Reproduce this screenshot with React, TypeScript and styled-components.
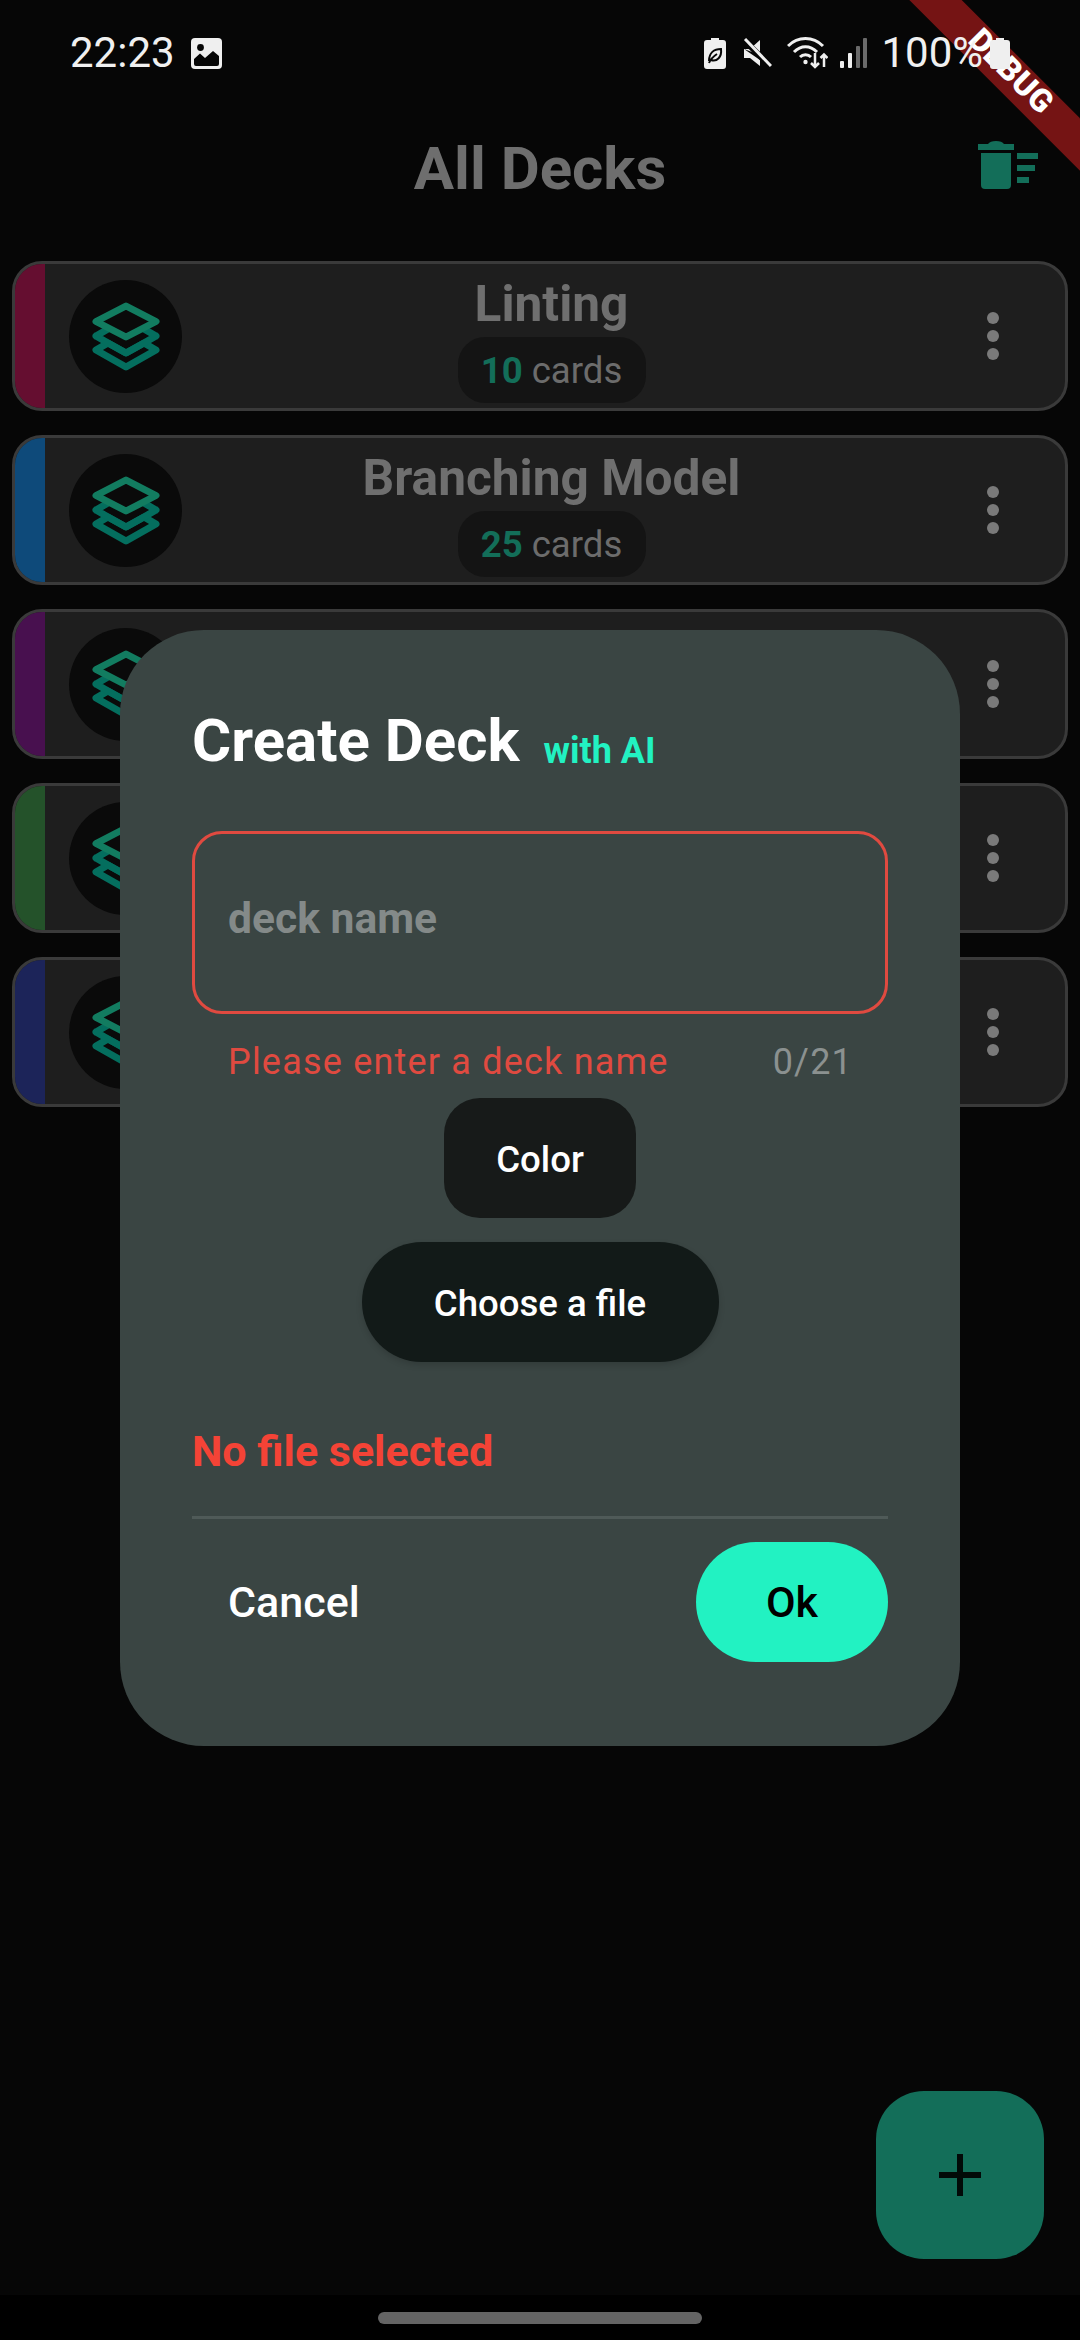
import React from "react";
import styled, { createGlobalStyle } from "styled-components";

const Global = createGlobalStyle`
  html, body { margin: 0; padding: 0; background: #060606; }
  body { font-family: Roboto, "Liberation Sans", sans-serif; overflow: hidden; }
  * { box-sizing: border-box; }
`;

const Page = styled.div`
  position: relative;
  width: 1080px;
  height: 2340px;
  display: flex;
  flex-direction: column;
  background: #060606;
  overflow: hidden;
`;

const Content = styled.main`
  flex: 1;
  display: flex;
  flex-direction: column;
`;

const StatusBar = styled.div`
  position: relative;
  z-index: 3;
  height: 72px;
  padding: 37px 70px 0 70px;
  display: flex;
  align-items: flex-start;
  justify-content: space-between;
  color: #eeeeee;
`;

const StatusLeft = styled.div`
  display: flex;
  align-items: center;
  gap: 16px;
  height: 32px;
`;

const StatusRight = styled.div`
  display: flex;
  align-items: center;
  height: 32px;
`;

const StatusText = styled.span`
  font-family: Roboto, sans-serif;
  font-size: 42px;
  line-height: 32px;
  font-weight: 400;
  color: #f0f0f0;
`;

const Percent = styled(StatusText)`
  margin-left: 14px;
  margin-right: 7px;
`;

const StatusIcon = styled.svg<{ $gap?: number }>`
  display: block;
  flex: none;
  margin-right: ${(p) => p.$gap ?? 0}px;
`;

const Header = styled.header`
  height: 189px;
  display: grid;
  grid-template-columns: 1fr auto 1fr;
  align-items: center;
  padding: 0 42px;
`;

const Title = styled.h1`
  grid-column: 2;
  margin: 0;
  padding-top: 3px;
  font-size: 60px;
  font-weight: 700;
  color: #6e6e6e;
`;

const TrashIcon = styled.svg`
  grid-column: 3;
  justify-self: end;
  display: block;
  margin-bottom: 3px;
`;

const DeckList = styled.div`
  display: flex;
  flex-direction: column;
  gap: 24px;
  padding: 0 12px;
`;

const Card = styled.div`
  height: 150px;
  display: flex;
  align-items: center;
  background: #1e1e1e;
  border: 3px solid #3a3a3a;
  border-radius: 30px;
  overflow: hidden;
`;

const Stripe = styled.div<{ $color: string }>`
  width: 30px;
  align-self: stretch;
  flex: none;
  background: ${(p) => p.$color};
`;

const Avatar = styled.div`
  width: 113px;
  height: 113px;
  margin-left: 24px;
  flex: none;
  border-radius: 50%;
  background: #0a0a0a;
  display: flex;
  align-items: center;
  justify-content: center;
`;

const CardBody = styled.div`
  flex: 1;
  min-width: 0;
  padding-top: 2px;
  display: flex;
  flex-direction: column;
  align-items: center;
`;

const DeckName = styled.div`
  font-size: 49.6px;
  line-height: 66px;
  font-weight: 700;
  color: #6f6f6f;
`;

const CountPill = styled.div`
  width: 188px;
  height: 66px;
  border-radius: 27px;
  background: #141414;
  display: flex;
  align-items: center;
  justify-content: center;
  gap: 9px;
  font-size: 36.6px;
  color: #6c6c6c;
`;

const CountValue = styled.span`
  font-weight: 700;
  color: #136e59;
`;

const MenuButton = styled.div`
  width: 144px;
  flex: none;
  display: flex;
  justify-content: center;
`;

const Dialog = styled.section`
  position: absolute;
  z-index: 2;
  left: 120px;
  top: 630px;
  width: 840px;
  height: 1116px;
  padding: 72px 72px 84px;
  background: #3a4543;
  border-radius: 84px;
  display: flex;
  flex-direction: column;
`;

const DialogTitleRow = styled.div`
  display: flex;
  align-items: flex-end;
  gap: 24px;
  height: 78px;
  margin-bottom: 51px;
`;

const DialogTitle = styled.h2`
  margin: 0;
  font-size: 60px;
  line-height: 78px;
  font-weight: 700;
  color: #ffffff;
`;

const AiTag = styled.span`
  font-size: 36px;
  line-height: 57px;
  font-weight: 700;
  color: #22f2c2;
`;

const NameField = styled.div`
  height: 183px;
  padding: 0 33px 9px;
  display: flex;
  align-items: center;
  border: 3px solid #e04a40;
  border-radius: 30px;
  font-size: 42.6px;
  font-weight: 700;
  color: #848a89;
`;

const HelperRow = styled.div`
  height: 84px;
  padding: 27px 35px 0 36px;
  display: flex;
  justify-content: space-between;
  font-size: 36px;
  line-height: 42px;
  letter-spacing: 1.2px;
`;

const HelperError = styled.span`
  color: #e04a40;
`;

const HelperCount = styled.span`
  color: #8b9190;
`;

const ButtonStack = styled.div`
  display: flex;
  flex-direction: column;
  align-items: center;
  gap: 24px;
`;

const ColorButton = styled.button`
  width: 192px;
  height: 120px;
  border: 0;
  border-radius: 36px;
  padding: 3px 0 0;
  background: #171a19;
  color: #ffffff;
  font: 500 36.6px Roboto, sans-serif;
`;

const FileButton = styled.button`
  width: 357px;
  height: 120px;
  border: 0;
  border-radius: 60px;
  padding: 3px 0 0;
  background: #121a18;
  color: #ffffff;
  font: 500 36.6px Roboto, sans-serif;
  box-shadow: 0 3px 6px rgba(0, 0, 0, 0.15);
`;

const FileError = styled.div`
  margin-top: 62px;
  font-size: 43px;
  line-height: 54px;
  font-weight: 700;
  color: #f44336;
`;

const Divider = styled.hr`
  margin: 38px 0 23px;
  height: 3px;
  border: 0;
  background: #4f5a58;
`;

const DialogActions = styled.div`
  display: flex;
  align-items: center;
  justify-content: space-between;
`;

const CancelButton = styled.button`
  padding: 0 0 0 36px;
  border: 0;
  background: transparent;
  color: #ffffff;
  font: 500 43px Roboto, sans-serif;
`;

const OkButton = styled.button`
  width: 192px;
  height: 120px;
  border: 0;
  border-radius: 60px;
  padding: 0;
  background: #22f2c2;
  color: #000000;
  font: 500 43px Roboto, sans-serif;
`;

const Fab = styled.button`
  position: absolute;
  z-index: 2;
  left: 876px;
  top: 2091px;
  width: 168px;
  height: 168px;
  border: 0;
  border-radius: 48px;
  padding: 0;
  background: #136e59;
  display: flex;
  align-items: center;
  justify-content: center;
`;

const NavBar = styled.div`
  height: 45px;
  padding-top: 1px;
  background: #000000;
  display: flex;
  align-items: center;
  justify-content: center;
`;

const HomePill = styled.div`
  width: 324px;
  height: 12px;
  border-radius: 6px;
  background: #646464;
`;

const Ribbon = styled.div`
  position: absolute;
  z-index: 1;
  left: 856px;
  top: 55px;
  width: 306px;
  height: 37px;
  padding-bottom: 6px;
  transform: rotate(45deg);
  background: #751414;
  color: #ffffff;
  display: flex;
  align-items: center;
  justify-content: center;
  font-size: 32px;
  line-height: 37px;
  font-weight: 900;
  letter-spacing: 0.5px;
`;

const LayersIcon = () => (
  <svg width="68" height="69" viewBox="0 0 68 69" fill="none" strokeLinejoin="round" strokeLinecap="round">
    <path d="M4 48 34 65 64 48 52 41 34 51 16 41Z" stroke="#046e5e" strokeWidth="7" />
    <path d="M4 34 16 27M64 34 52 27M4 34 16 41M64 34 52 41M16 41 34 51 52 41" stroke="#046e5e" strokeWidth="7" />
    <path d="M34 4 64 19.500 34 35 4 19.500Z" stroke="#127c60" strokeWidth="7" />
  </svg>
);

const Kebab = () => (
  <svg width="12" height="48" viewBox="0 0 12 48" fill="#7a7a7a">
    <circle cx="6" cy="6" r="6" />
    <circle cx="6" cy="24" r="6" />
    <circle cx="6" cy="42" r="6" />
  </svg>
);

const decks = [
  { name: "Linting", count: 10, color: "#650e30" },
  { name: "Branching Model", count: 25, color: "#0e4a7a" },
  { name: "", count: 0, color: "#48104f" },
  { name: "", count: 0, color: "#24522a" },
  { name: "", count: 0, color: "#1c2459" },
];

export default function App() {
  return (
    <Page>
      <Global />
      <Content>
        <StatusBar>
          <StatusLeft>
            <StatusText>22:23</StatusText>
            <StatusIcon width="31" height="31" viewBox="0 0 31 31">
              <rect width="31" height="31" rx="4" fill="#efefef" />
              <circle cx="9.500" cy="9.500" r="3.400" fill="#060606" />
              <path d="M3 26V21L9 15.500 14 20 22 13 28 18V26Q28 28 26 28H5Q3 28 3 26Z" fill="#060606" />
            </StatusIcon>
          </StatusLeft>
          <StatusRight>
            <StatusIcon $gap={17} width="22" height="31" viewBox="0 0 22 31">
              <path d="M7 0H15V2H19Q22 2 22 5V28Q22 31 19 31H3Q0 31 0 28V5Q0 2 3 2H7Z" fill="#efefef" />
              <path d="M5 23C5 15 10 11 17 11 18 19 13 24 7 22M5 25C7 20 10 18 13 16" fill="none" stroke="#060606" strokeWidth="2" />
            </StatusIcon>
            <StatusIcon $gap={15} width="29" height="30" viewBox="0 0 29 30">
              <path d="M1 11H7L17 2V17ZM1 11V20H7L17 28V22Z" fill="#efefef" />
              <path d="M1 2 28 29" stroke="#060606" strokeWidth="6" />
              <path d="M2 1 28 28" stroke="#efefef" strokeWidth="3" />
            </StatusIcon>
            <StatusIcon $gap={12} width="41" height="32" viewBox="0 0 41 32" fill="none" stroke="#efefef">
              <path d="M1 9C11 -1 26 -1 36 9" strokeWidth="3" />
              <path d="M7 15C14 8 23 8 30 15" strokeWidth="3" />
              <path d="M13 20C16 17 21 17 24 20" strokeWidth="3" />
              <circle cx="18.500" cy="25" r="2.200" fill="#efefef" stroke="none" />
              <path d="M28 16V30M24 26 28 30 32 26" strokeWidth="2.500" />
              <path d="M37 30V18M33.500 21 37 17.500 40.500 21" strokeWidth="2.500" />
            </StatusIcon>
            <StatusIcon width="27" height="30" viewBox="0 0 27 30">
              <rect x="0" y="23" width="4" height="7" rx="1" fill="#efefef" />
              <rect x="8" y="15" width="4" height="15" rx="1" fill="#efefef" />
              <rect x="16" y="8" width="4" height="22" rx="1" fill="#6a6a6a" />
              <rect x="23" y="0" width="4" height="30" rx="1" fill="#6a6a6a" />
            </StatusIcon>
            <Percent>100%</Percent>
            <StatusIcon width="20" height="31" viewBox="0 0 20 31">
              <path d="M6 0H14V2H17Q20 2 20 5V28Q20 31 17 31H3Q0 31 0 28V5Q0 2 3 2H6Z" fill="#efefef" />
            </StatusIcon>
          </StatusRight>
        </StatusBar>
        <Ribbon>DEBUG</Ribbon>
        <Header>
          <Title>All Decks</Title>
          <TrashIcon width="60" height="48" viewBox="0 0 60 48" fill="#136e59">
            <path d="M0 3H10Q12 0 18 0T26 3H36V9H0Z" />
            <path d="M3 12H33V44Q33 48 29 48H7Q3 48 3 44Z" />
            <rect x="39" y="12" width="21" height="6" />
            <rect x="39" y="24" width="18" height="6" />
            <rect x="39" y="36" width="12" height="6" />
          </TrashIcon>
        </Header>
        <DeckList>
          {decks.map((deck, i) => (
            <Card key={i}>
              <Stripe $color={deck.color} />
              <Avatar>
                <LayersIcon />
              </Avatar>
              <CardBody>
                {deck.name && (
                  <>
                    <DeckName>{deck.name}</DeckName>
                    <CountPill>
                      <CountValue>{deck.count}</CountValue>
                      <span>cards</span>
                    </CountPill>
                  </>
                )}
              </CardBody>
              <MenuButton>
                <Kebab />
              </MenuButton>
            </Card>
          ))}
        </DeckList>
      </Content>
      <Dialog>
        <DialogTitleRow>
          <DialogTitle>Create Deck</DialogTitle>
          <AiTag>with AI</AiTag>
        </DialogTitleRow>
        <NameField>deck name</NameField>
        <HelperRow>
          <HelperError>Please enter a deck name</HelperError>
          <HelperCount>0/21</HelperCount>
        </HelperRow>
        <ButtonStack>
          <ColorButton>Color</ColorButton>
          <FileButton>Choose a file</FileButton>
        </ButtonStack>
        <FileError>No file selected</FileError>
        <Divider />
        <DialogActions>
          <CancelButton>Cancel</CancelButton>
          <OkButton>Ok</OkButton>
        </DialogActions>
      </Dialog>
      <Fab aria-label="Add deck">
        <svg width="42" height="42" viewBox="0 0 42 42">
          <path d="M21 0V42M0 21H42" stroke="#020a08" strokeWidth="6" />
        </svg>
      </Fab>
      <NavBar>
        <HomePill />
      </NavBar>
    </Page>
  );
}
